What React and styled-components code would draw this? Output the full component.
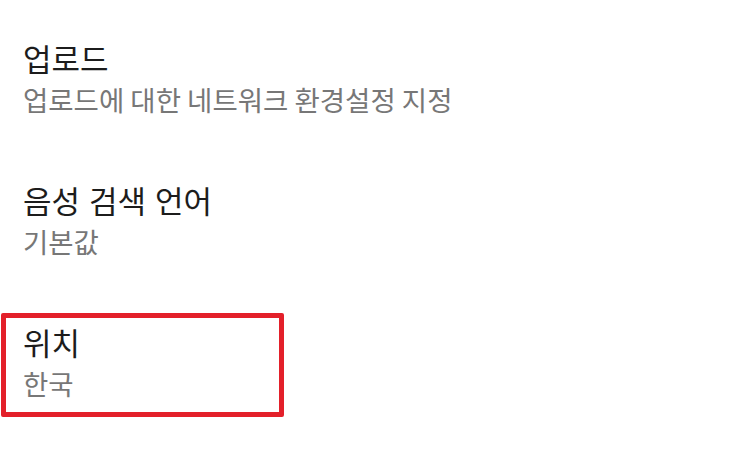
import React from "react";
import styled, { createGlobalStyle } from "styled-components";

const Global = createGlobalStyle`
  html, body { margin: 0; padding: 0; background: #ffffff; }
  body { font-family: "Noto Sans CJK KR", "Noto Sans", sans-serif; }
`;

const List = styled.div`
  width: 750px;
  height: 450px;
  box-sizing: border-box;
  padding-top: 8px;
  display: flex;
  flex-direction: column;
  overflow: hidden;
`;

const Item = styled.div`
  position: relative;
  display: flex;
  flex-direction: column;
  padding: 30px 23px;
  ${(p) =>
    p.$highlighted &&
    `
    &::after {
      content: "";
      position: absolute;
      left: 1px;
      top: 21px;
      width: 283px;
      height: 104px;
      box-sizing: border-box;
      border: 5px solid #e3202a;
      border-radius: 2px;
      pointer-events: none;
    }
  `}
`;

const Title = styled.div`
  font-size: 31px;
  line-height: 40px;
  color: #1c1c1c;
  white-space: nowrap;
  word-spacing: 2px;
`;

const Subtitle = styled.div`
  font-size: 27.5px;
  line-height: 42px;
  color: #777777;
  white-space: nowrap;
`;

const items = [
  { title: "업로드", sub: "업로드에 대한 네트워크 환경설정 지정" },
  { title: "음성 검색 언어", sub: "기본값" },
  { title: "위치", sub: "한국", highlighted: true },
];

export default function App() {
  return (
    <>
      <Global />
      <List>
        {items.map((it) => (
          <Item key={it.title} $highlighted={it.highlighted}>
            <Title>{it.title}</Title>
            <Subtitle>{it.sub}</Subtitle>
          </Item>
        ))}
      </List>
    </>
  );
}
